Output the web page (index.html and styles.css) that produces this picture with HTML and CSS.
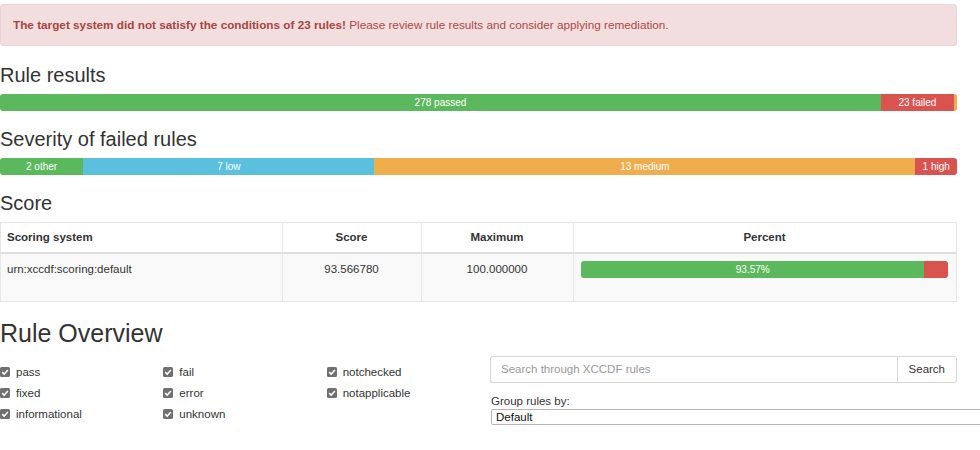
FILE: index.html
```html
<!DOCTYPE html>
<html>
<head>
<meta charset="utf-8">
<link rel="stylesheet" href="styles.css">
</head>
<body>
<div class="page">
  <div class="alert"><strong>The target system did not satisfy the conditions of 23 rules!</strong> Please review rule results and consider applying remediation.</div>

  <h2 class="heading first">Rule results</h2>
  <div class="bar">
    <div class="seg green" style="width:92.053%">278 passed</div>
    <div class="seg red" style="width:7.616%">23 failed</div>
    <div class="seg orange" style="width:0.331%"></div>
  </div>

  <h2 class="heading">Severity of failed rules</h2>
  <div class="bar">
    <div class="seg green" style="width:8.696%">2 other</div>
    <div class="seg blue" style="width:30.435%">7 low</div>
    <div class="seg orange" style="width:56.522%">13 medium</div>
    <div class="seg red" style="width:4.348%">1 high</div>
  </div>

  <h2 class="heading">Score</h2>
  <table class="score">
    <thead>
      <tr>
        <th class="c1">Scoring system</th>
        <th class="c2 center">Score</th>
        <th class="c3 center">Maximum</th>
        <th class="c4 center">Percent</th>
      </tr>
    </thead>
    <tbody>
      <tr>
        <td>urn:xccdf:scoring:default</td>
        <td class="center">93.566780</td>
        <td class="center">100.000000</td>
        <td class="pct">
          <div class="bar small">
            <div class="seg green" style="width:93.57%">93.57%</div>
            <div class="seg red" style="width:6.43%"></div>
          </div>
        </td>
      </tr>
    </tbody>
  </table>

  <h1 class="big">Rule Overview</h1>
  <div class="overview">
    <div class="checks">
      <label class="chk"><svg class="box" viewBox="0 0 10 10"><rect x="0" y="0" width="10" height="10" rx="1.6"/><path d="M2.2 5.1 L4.2 7.1 L7.9 3.1"/></svg>pass</label>
      <label class="chk"><svg class="box" viewBox="0 0 10 10"><rect x="0" y="0" width="10" height="10" rx="1.6"/><path d="M2.2 5.1 L4.2 7.1 L7.9 3.1"/></svg>fail</label>
      <label class="chk"><svg class="box" viewBox="0 0 10 10"><rect x="0" y="0" width="10" height="10" rx="1.6"/><path d="M2.2 5.1 L4.2 7.1 L7.9 3.1"/></svg>notchecked</label>
      <label class="chk"><svg class="box" viewBox="0 0 10 10"><rect x="0" y="0" width="10" height="10" rx="1.6"/><path d="M2.2 5.1 L4.2 7.1 L7.9 3.1"/></svg>fixed</label>
      <label class="chk"><svg class="box" viewBox="0 0 10 10"><rect x="0" y="0" width="10" height="10" rx="1.6"/><path d="M2.2 5.1 L4.2 7.1 L7.9 3.1"/></svg>error</label>
      <label class="chk"><svg class="box" viewBox="0 0 10 10"><rect x="0" y="0" width="10" height="10" rx="1.6"/><path d="M2.2 5.1 L4.2 7.1 L7.9 3.1"/></svg>notapplicable</label>
      <label class="chk"><svg class="box" viewBox="0 0 10 10"><rect x="0" y="0" width="10" height="10" rx="1.6"/><path d="M2.2 5.1 L4.2 7.1 L7.9 3.1"/></svg>informational</label>
      <label class="chk"><svg class="box" viewBox="0 0 10 10"><rect x="0" y="0" width="10" height="10" rx="1.6"/><path d="M2.2 5.1 L4.2 7.1 L7.9 3.1"/></svg>unknown</label>
    </div>
    <div class="side">
      <div class="search">
        <div class="input">Search through XCCDF rules</div>
        <div class="btn">Search</div>
      </div>
      <div class="grouplabel">Group rules by:</div>
      <div class="select">Default</div>
    </div>
  </div>
</div>
</body>
</html>
```
FILE: styles.css
```css
html, body {
  margin: 0;
  padding: 0;
  background: #fff;
}
body {
  font-family: "Liberation Sans", Arial, sans-serif;
  color: #333;
  font-size: 11.5px;
  overflow: hidden;
}
.page {
  width: 957px;
}
.alert {
  margin-top: 4px;
  height: 40px;
  line-height: 40px;
  padding: 0 12px;
  background: #f2dede;
  border: 1px solid #ecd3d6;
  border-radius: 3px;
  color: #b04848;
  font-size: 11.75px;
  white-space: nowrap;
}
.alert strong {
  font-weight: bold;
  color: #a94442;
}
.heading {
  font-weight: normal;
  font-size: 20px;
  line-height: 24px;
  margin: 16px 0 7px;
  color: #333;
}
.heading.first {
  margin-top: 17px;
}
.big {
  font-weight: normal;
  font-size: 25px;
  line-height: 30px;
  margin: 16px 0 8px;
  color: #333;
}
.bar {
  display: flex;
  height: 17px;
  border-radius: 3px;
  overflow: hidden;
  background: #f5f5f5;
}
.seg {
  height: 17px;
  line-height: 17px;
  color: #fff;
  font-size: 10px;
  text-align: center;
  white-space: nowrap;
  overflow: hidden;
}
.green { background: #5cb85c; }
.red { background: #d9534f; }
.orange { background: #f0ad4e; }
.blue { background: #5bc0de; }

.score {
  width: 957px;
  border-collapse: collapse;
  border: 1px solid #e3e3e3;
  font-size: 11.5px;
}
.score th, .score td {
  border: 1px solid #e6e6e6;
  padding: 6px 7px 6px 6px;
  line-height: 17px;
  text-align: left;
  vertical-align: top;
}
.score th {
  font-weight: bold;
  border-bottom: 2px solid #dedede;
  background: #fff;
}
.score td {
  padding-top: 7px;
  padding-bottom: 7px;
  background: #f9f9f9;
}
.score .center { text-align: center; }
.c1 { width: 268px; }
.c2 { width: 125px; }
.c3 { width: 138px; }
.score td.pct {
  padding-left: 7px;
  padding-right: 8px;
}
.bar.small {
  margin-bottom: 16px;
}

.overview {
  display: grid;
  grid-template-columns: 490px 467px;
}
.checks {
  display: grid;
  grid-template-columns: repeat(3, 1fr);
  grid-auto-rows: 21px;
  padding-top: 5px;
  align-content: start;
}
.chk {
  display: flex;
  align-items: center;
  font-size: 11.5px;
  color: #333;
  white-space: nowrap;
}
.box {
  width: 10px;
  height: 10px;
  margin-left: 0;
  margin-right: 6px;
  flex: none;
}
.box rect { fill: #707070; }
.box path {
  fill: none;
  stroke: #fff;
  stroke-width: 1.5;
}
.side {
  display: flex;
  flex-direction: column;
}
.search {
  display: flex;
  height: 27px;
}
.input {
  flex: 1;
  border: 1px solid #d6d6d6;
  border-right: none;
  border-radius: 3px 0 0 3px;
  padding: 0 10px;
  line-height: 25px;
  color: #999;
  font-size: 11.5px;
}
.btn {
  border: 1px solid #d6d6d6;
  border-radius: 0 3px 3px 0;
  padding: 0 11px;
  line-height: 25px;
  color: #333;
  font-size: 11.5px;
  background: #fff;
}
.grouplabel {
  margin-top: 11px;
  line-height: 14px;
  padding-left: 1px;
  color: #333;
  font-size: 11.5px;
}
.select {
  margin-top: 1px;
  margin-left: 1px;
  width: 500px;
  height: 14px;
  line-height: 14px;
  border: 1px solid #b5b5b5;
  border-radius: 2px;
  padding-left: 4px;
  color: #111;
  font-size: 11.5px;
}
```
